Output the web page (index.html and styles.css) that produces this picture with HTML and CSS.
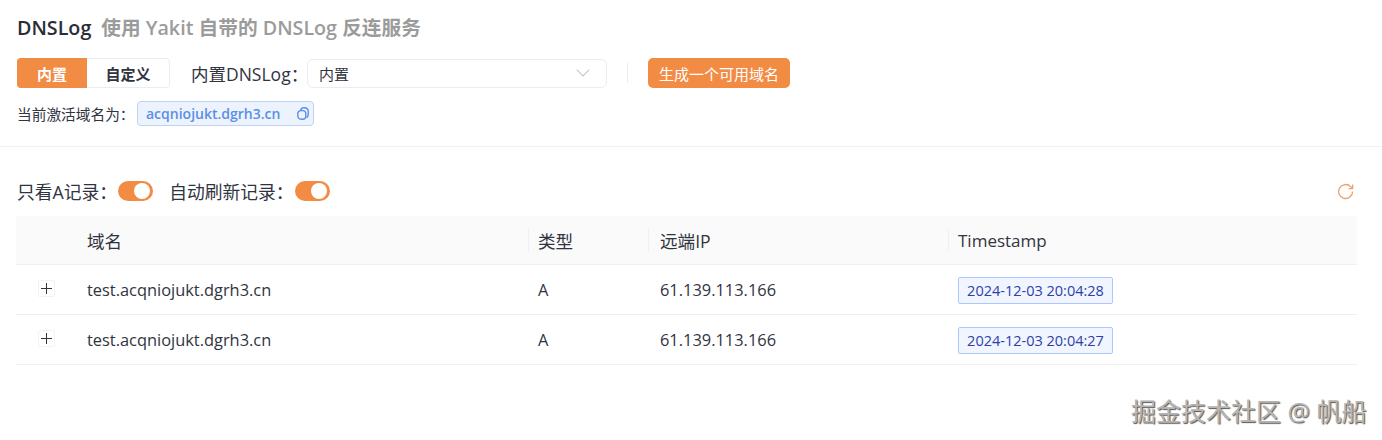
FILE: index.html
```html
<!DOCTYPE html>
<html lang="zh">
<head>
<meta charset="utf-8">
<title>DNSLog</title>
<link rel="stylesheet" href="styles.css">
</head>
<body>
<header class="head">
  <h1 class="title"><span class="title-main">DNSLog</span><span class="title-sub">使用 Yakit 自带的 DNSLog 反连服务</span></h1>
  <div class="controls">
    <div class="radio">
      <span class="radio-item on">内置</span>
      <span class="radio-item">自定义</span>
    </div>
    <span class="field-label">内置DNSLog：</span>
    <div class="select">
      <span>内置</span>
      <svg class="chev" width="14" height="8" viewBox="0 0 14 8"><path d="M.7.7 7 7 13.3.7" fill="none" stroke="#c4c6cb" stroke-width="1.1"/></svg>
    </div>
    <i class="vline"></i>
    <button class="gen">生成一个可用域名</button>
  </div>
  <div class="active">
    <span class="active-label">当前激活域名为：</span>
    <span class="domain">
      <span>acqniojukt.dgrh3.cn</span>
      <svg width="12" height="13" viewBox="0 0 12 13" fill="none" stroke="#5b8fe6" stroke-width="1.4"><path d="M3.6 3.4C4 1.8 5.2.8 6.8.8h.6c2.2 0 3.8 1.6 3.8 3.8v3.2c0 1.3-.6 2.3-1.6 2.8"/><rect x=".8" y="3.6" width="8" height="8.6" rx="3.2"/></svg>
    </span>
  </div>
</header>
<main class="body">
  <div class="filters">
    <span class="filter-label">只看A记录：</span>
    <span class="switch"></span>
    <span class="filter-label second">自动刷新记录：</span>
    <span class="switch"></span>
    <svg class="reload" width="17" height="17" viewBox="0 0 17 17" fill="none" stroke="#e9a06a" stroke-width="1.3"><path d="M15.6 8.5A7 7 0 1 1 13.6 3.6L15.5 5.6"/><path d="M15.6 1.4V5.7H11.6"/></svg>
  </div>
  <div class="table">
    <div class="row thead">
      <div class="cell c-exp"></div>
      <div class="cell c-name">域名</div>
      <div class="cell c-type sep">类型</div>
      <div class="cell c-ip sep">远端IP</div>
      <div class="cell c-time sep ts">Timestamp</div>
    </div>
    <div class="row">
      <div class="cell c-exp"><span class="plus"></span></div>
      <div class="cell c-name">test.acqniojukt.dgrh3.cn</div>
      <div class="cell c-type">A</div>
      <div class="cell c-ip">61.139.113.166</div>
      <div class="cell c-time"><span class="stamp">2024-12-03 20:04:28</span></div>
    </div>
    <div class="row">
      <div class="cell c-exp"><span class="plus"></span></div>
      <div class="cell c-name">test.acqniojukt.dgrh3.cn</div>
      <div class="cell c-type">A</div>
      <div class="cell c-ip">61.139.113.166</div>
      <div class="cell c-time"><span class="stamp">2024-12-03 20:04:27</span></div>
    </div>
  </div>
</main>
<div class="mark">掘金技术社区 @ 帆船</div>
</body>
</html>
```

FILE: styles.css
```css
* { box-sizing: border-box; }
html, body { height: 100%; }
body {
  margin: 0;
  position: relative;
  overflow: hidden;
  background: #fff;
  color: #31343f;
  font-family: "Open Sans", "Noto Sans CJK SC", sans-serif;
  font-size: 14px;
}
.head {
  height: 147px;
  padding: 14px 17px 0;
  border-bottom: 1px solid #f0f1f3;
}
.title {
  margin: 0;
  height: 28px;
  display: flex;
  align-items: center;
  font-size: 19.7px;
  font-weight: 600;
  line-height: 28px;
}
.title-main { color: #2a2d36; }
.title-sub { margin-left: 10px; color: #9b9b9b; }
.controls {
  margin-top: 16px;
  height: 30px;
  display: flex;
  align-items: center;
}
.radio {
  width: 153px;
  height: 30px;
  display: flex;
  border: 1px solid #eaecf3;
  border-radius: 4px;
  font-size: 15px;
  font-weight: 700;
  color: #31343f;
}
.radio-item {
  flex: 1 1 0;
  display: flex;
  align-items: center;
  justify-content: center;
}
.radio-item.on {
  flex: 0 0 70px;
  margin: -1px 0 -1px -1px;
  background: #f28b44;
  color: #fff;
  border-radius: 4px 0 0 4px;
}
.field-label { margin-left: 21px; font-size: 17.5px; width: 115px; white-space: nowrap; }
.select {
  margin-left: 1px;
  width: 300px;
  height: 29px;
  padding: 0 16px 0 11px;
  display: flex;
  align-items: center;
  justify-content: space-between;
  border: 1px solid #eaecf3;
  border-radius: 6px;
  font-size: 15px;
}
.vline { margin-left: 20px; width: 1px; height: 20px; background: #eaecf0; }
.gen {
  margin-left: 20px;
  width: 142px;
  height: 30px;
  padding: 0;
  border: 0;
  border-radius: 5px;
  background: #f28b44;
  color: #fff;
  font: 15px "Open Sans", "Noto Sans CJK SC", sans-serif;
}
.active {
  margin-top: 13px;
  height: 25px;
  display: flex;
  align-items: center;
  font-size: 14.7px;
}
.active-label { width: 120px; white-space: nowrap; }
.domain {
  width: 177px;
  height: 25px;
  padding: 0 4px 0 8px;
  display: flex;
  align-items: center;
  justify-content: space-between;
  background: #edf3fd;
  border: 1px solid #bcd3f5;
  border-radius: 4px;
  color: #5b8fe6;
  font-size: 14px;
  font-weight: 600;
}
.body { padding: 0 0 0 16px; width: 1357px; }
.filters {
  height: 69px;
  padding: 18px 0 0 1px;
  display: flex;
  align-items: center;
  font-size: 17.8px;
}
.filter-label { white-space: nowrap; color: #31343f; }
.second { margin-left: 16px; }
.switch {
  position: relative;
  margin-left: 1px;
  width: 35px;
  height: 20px;
  border-radius: 10px;
  background: #f28b44;
}
.switch::after {
  content: "";
  position: absolute;
  right: 3px;
  top: 2px;
  width: 16px;
  height: 16px;
  border-radius: 50%;
  background: #fff;
}
.reload { margin: 1px 3px 0 auto; }
.row {
  height: 50px;
  display: flex;
  align-items: center;
  border-bottom: 1px solid #f0f0f0;
  font-size: 16.4px;
  color: #31343f;
}
.thead { height: 49px; background: #fafafa; font-size: 17.6px; }
.cell { position: relative; padding-left: 10px; }
.c-exp { width: 60px; padding: 0; display: flex; justify-content: center; }
.c-name { width: 452px; padding-left: 11px; }
.c-type { width: 120px; }
.c-ip { width: 300px; padding-left: 12px; }
.c-time { flex: 1; }
.ts { font-weight: 500; font-size: 17px; }
.sep::before {
  content: "";
  position: absolute;
  left: 0;
  top: 50%;
  width: 1px;
  height: 24px;
  margin-top: -12px;
  background: #f0f0f0;
}
.plus {
  position: relative;
  width: 17px;
  height: 17px;
  margin-top: -2px;
  border: 1px solid #f3f3f3;
  border-radius: 2px;
}
.plus::before, .plus::after {
  content: "";
  position: absolute;
  background: #31343f;
}
.plus::before { left: 2px; top: 7px; width: 11px; height: 1px; }
.plus::after { left: 7px; top: 2px; width: 1px; height: 11px; }
.stamp {
  display: inline-block;
  width: 155px;
  height: 27px;
  margin-top: 1px;
  line-height: 25px;
  text-align: center;
  background: #f0f5ff;
  border: 1px solid #adc6ff;
  border-radius: 2px;
  color: #2f3fa8;
  font-size: 14.5px;
}
.mark {
  position: absolute;
  left: 1131px;
  top: 395px;
  font-size: 25px;
  line-height: 32px;
  color: #b5b5b5;
  white-space: nowrap;
  text-shadow: 1px 1px 1px #555;
}
```
